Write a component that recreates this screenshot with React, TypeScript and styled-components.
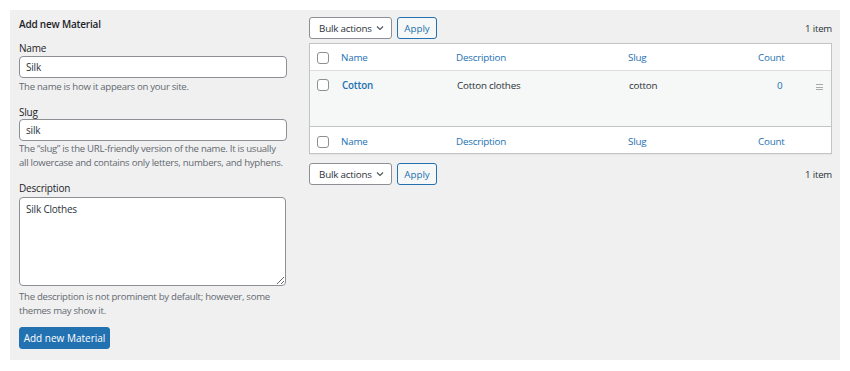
import styled, { createGlobalStyle } from 'styled-components';

const GlobalStyle = createGlobalStyle`
  body {
    margin: 0;
    background: #ffffff;
    font-family: 'Open Sans', 'Noto Sans', sans-serif;
    letter-spacing: -0.2px;
    color: #1d2327;
  }
`;

const Panel = styled.div`
  margin: 10px;
  width: 830px;
  box-sizing: border-box;
  background: #f0f0f1;
  padding: 7px 8px 11px 9px;
  display: flex;
  gap: 22px;
  align-items: flex-start;
`;

const FormColumn = styled.form`
  width: 268px;
  flex-shrink: 0;
  display: flex;
  flex-direction: column;
`;

const Title = styled.h2`
  margin: 0 0 10px;
  font-size: 10px;
  line-height: 14px;
  font-weight: 600;
`;

const Field = styled.div<{ $gap?: number }>`
  display: flex;
  flex-direction: column;
  margin-bottom: ${(p) => p.$gap ?? 11}px;
`;

const Label = styled.label<{ $space?: number }>`
  font-size: 10px;
  line-height: 14px;
  margin-bottom: ${(p) => p.$space ?? 0}px;
`;

const TextInput = styled.input`
  box-sizing: border-box;
  width: 268px;
  height: 22px;
  padding: 0 6px;
  border: 1px solid #8c8f94;
  border-radius: 4px;
  background: #fff;
  font: inherit;
  font-size: 10px;
  letter-spacing: -0.2px;
  color: #2c3338;
  outline: none;
`;

const TextArea = styled.textarea`
  box-sizing: border-box;
  width: 267px;
  height: 89px;
  padding: 4px 6px;
  border: 1px solid #8c8f94;
  border-radius: 4px;
  background: #fff;
  font: inherit;
  font-size: 10px;
  line-height: 14px;
  letter-spacing: -0.2px;
  color: #2c3338;
  outline: none;
  resize: both;
`;

const Hint = styled.p<{ $top?: number }>`
  margin: ${(p) => p.$top ?? 2}px 0 0;
  font-size: 9.6px;
  line-height: 14px;
  letter-spacing: -0.27px;
  color: #646970;
`;

const PrimaryButton = styled.button`
  align-self: flex-start;
  width: 91px;
  height: 22px;
  padding: 0;
  border: 1px solid #2271b1;
  border-radius: 3px;
  background: #2271b1;
  color: #fff;
  font: inherit;
  font-size: 10px;
  margin-top: 9px;
`;

const ListColumn = styled.div`
  flex: 1;
  display: flex;
  flex-direction: column;
`;

const TableNav = styled.div<{ $top: number; $bottom: number }>`
  display: flex;
  align-items: center;
  gap: 5px;
  height: 22px;
  margin: ${(p) => p.$top}px 0 ${(p) => p.$bottom}px;
`;

const Select = styled.div`
  box-sizing: border-box;
  width: 83px;
  height: 22px;
  padding: 0 7px 0 9px;
  border: 1px solid #8c8f94;
  border-radius: 3px;
  background: #fff;
  display: flex;
  align-items: center;
  justify-content: space-between;
  font-size: 9.8px;
  color: #2c3338;
`;

const SecondaryButton = styled.button`
  box-sizing: border-box;
  width: 40px;
  height: 22px;
  padding: 0;
  border: 1px solid #2271b1;
  border-radius: 3px;
  background: #f6f7f7;
  color: #2271b1;
  font: inherit;
  font-size: 9.8px;
`;

const Count = styled.span`
  margin-left: auto;
  font-size: 9.6px;
  color: #2c3338;
`;

const Table = styled.div`
  border: 1px solid #c3c4c7;
  background: #fff;
  box-shadow: 0 1px 1px rgba(0, 0, 0, 0.04);
`;

const Row = styled.div<{ $body?: boolean; $foot?: boolean }>`
  display: grid;
  grid-template-columns: 31px 115px 172px 130px 50px 1fr;
  align-items: ${(p) => (p.$body ? 'start' : 'center')};
  height: ${(p) => (p.$body ? 55 : p.$foot ? 23 : 25)}px;
  padding-top: ${(p) => (p.$body ? 8 : p.$foot ? 3 : 1)}px;
  box-sizing: ${(p) => (p.$body ? 'border-box' : 'content-box')};
  background: ${(p) => (p.$body ? '#f6f7f7' : '#fff')};
  border-top: ${(p) => (p.$foot ? '1px solid #c3c4c7' : 'none')};
  border-bottom: ${(p) => (p.$foot || p.$body ? 'none' : '1px solid #dcdcde')};
  font-size: 9.8px;
  line-height: 14px;
`;

const Check = styled.span`
  box-sizing: border-box;
  width: 12px;
  height: 12px;
  margin-left: 7px;
  border: 1px solid #8c8f94;
  border-radius: 3px;
  background: #fff;
`;

const HeadLink = styled.span<{ $shift?: number }>`
  color: #2271b1;
  margin-left: ${(p) => p.$shift ?? 0}px;
`;

const Cell = styled.span<{ $shift?: number }>`
  color: #2c3338;
  margin-left: ${(p) => p.$shift ?? 0}px;
`;

const RowTitle = styled.a`
  color: #2271b1;
  font-weight: 600;
  margin-left: 1px;
  text-decoration: none;
`;

const Handle = styled.span`
  display: flex;
  flex-direction: column;
  gap: 1.5px;
  width: 7px;
  margin: 5px 0 0 8px;

  i {
    display: block;
    height: 1px;
    background: #a7aaad;
  }
`;

function Chevron() {
  return (
    <svg width="8" height="6" viewBox="0 0 8 6" fill="none">
      <path d="M1 1.5 L4 4.5 L7 1.5" stroke="#50575e" strokeWidth="1.2" />
    </svg>
  );
}

function Nav({ top, bottom }: { top: number; bottom: number }) {
  return (
    <TableNav $top={top} $bottom={bottom}>
      <Select>
        Bulk actions
        <Chevron />
      </Select>
      <SecondaryButton type="button">Apply</SecondaryButton>
      <Count>1 item</Count>
    </TableNav>
  );
}

function HeaderRow({ foot }: { foot?: boolean }) {
  return (
    <Row $foot={foot}>
      <Check />
      <HeadLink>Name</HeadLink>
      <HeadLink>Description</HeadLink>
      <HeadLink>Slug</HeadLink>
      <HeadLink>Count</HeadLink>
      <span />
    </Row>
  );
}

export default function App() {
  return (
    <>
      <GlobalStyle />
      <Panel>
        <FormColumn onSubmit={(e) => e.preventDefault()}>
          <Title>Add new Material</Title>
          <Field>
            <Label $space={1}>Name</Label>
            <TextInput defaultValue="Silk" />
            <Hint>The name is how it appears on your site.</Hint>
          </Field>
          <Field>
            <Label>Slug</Label>
            <TextInput defaultValue="silk" />
            <Hint $top={1}>
              The “slug” is the URL-friendly version of the name. It is usually all lowercase and
              contains only letters, numbers, and hyphens.
            </Hint>
          </Field>
          <Field $gap={0}>
            <Label $space={2}>Description</Label>
            <TextArea defaultValue="Silk Clothes" />
            <Hint $top={4}>
              The description is not prominent by default; however, some themes may show it.
            </Hint>
          </Field>
          <PrimaryButton type="submit">Add new Material</PrimaryButton>
        </FormColumn>

        <ListColumn>
          <Nav top={0} bottom={4} />
          <Table>
            <HeaderRow />
            <Row $body>
              <Check />
              <RowTitle href="#">Cotton</RowTitle>
              <Cell $shift={1}>Cotton clothes</Cell>
              <Cell $shift={1}>cotton</Cell>
              <HeadLink $shift={19}>0</HeadLink>
              <Handle>
                <i />
                <i />
                <i />
              </Handle>
            </Row>
            <HeaderRow foot />
          </Table>
          <Nav top={9} bottom={0} />
        </ListColumn>
      </Panel>
    </>
  );
}
